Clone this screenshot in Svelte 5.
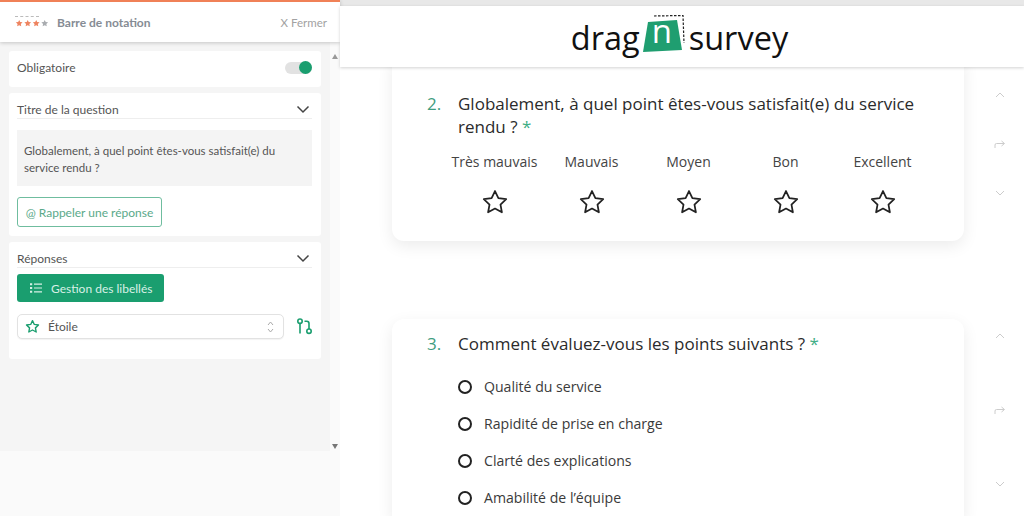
<script>
	const ratings = ['Très mauvais', 'Mauvais', 'Moyen', 'Bon', 'Excellent'];
	const points = [
		'Qualité du service',
		'Rapidité de prise en charge',
		'Clarté des explications',
		'Amabilité de l’équipe'
	];
	const starPath = 'M12 2.6l2.9 6.1 6.7.9-4.9 4.6 1.2 6.6-5.9-3.2-5.9 3.2 1.2-6.6-4.9-4.6 6.7-.9z';
</script>

{#snippet chevron()}
	<svg class="chevron" width="14" height="9" viewBox="0 0 14 9" aria-hidden="true">
		<path d="M1.5 1.5L7 7l5.5-5.5" fill="none" stroke="#444" stroke-width="1.5" />
	</svg>
{/snippet}

{#snippet sideControls(stepUp, stepShare)}
	<div class="side-controls" style="padding-top:{stepUp}px; gap:{stepShare}px">
		<svg width="10" height="6" viewBox="0 0 10 6"><path d="M1 5l4-4 4 4" fill="none" stroke="#ccc" /></svg>
		<svg width="12" height="10" viewBox="0 0 12 10"><path d="M1 9V6q0-1.500 1.500-1.500H10M7.500 2L10.500 4.500 7.500 7" fill="none" stroke="#ccc" /></svg>
		<svg width="10" height="6" viewBox="0 0 10 6"><path d="M1 1l4 4 4-4" fill="none" stroke="#ccc" /></svg>
	</div>
{/snippet}

<div class="page">
	<aside class="sidebar">
		<header class="side-head">
			<div class="head-title">
				<div class="mini-rating">
					<span class="dashes"></span>
					<svg width="34" height="9" viewBox="0 0 136 36">
						{#each [0, 1, 2, 3] as i}
							<path
								transform="translate({i * 34} 0) scale(1.4)"
								d={starPath}
								fill={i < 3 ? '#ee8460' : '#a9acb0'}
							/>
						{/each}
					</svg>
				</div>
				<strong>Barre de notation</strong>
			</div>
			<span class="close">X Fermer</span>
		</header>

		<div class="side-scroll">
			<div class="cards">
				<section class="card required">
					<span>Obligatoire</span>
					<span class="toggle"><span class="knob"></span></span>
				</section>

				<section class="card">
					<div class="card-title">
						<span>Titre de la question</span>
						{@render chevron()}
					</div>
					<div class="question-box">
						Globalement, à quel point êtes-vous satisfait(e) du service rendu ?
					</div>
					<button class="recall">@ Rappeler une réponse</button>
				</section>

				<section class="card answers">
					<div class="card-title">
						<span>Réponses</span>
						{@render chevron()}
					</div>
					<button class="labels">
						<svg width="12" height="10" viewBox="0 0 12 10" aria-hidden="true">
							<path
								d="M0 .2h2.200v2H0zM0 4h2.200v2H0zM0 7.800h2.200v2H0zM4 .6h8v1.200H4zM4 4.400h8v1.200H4zM4 8.200h8v1.200H4z"
								fill="#d8f0e6"
							/>
						</svg>
						Gestion des libellés
					</button>
					<div class="select-row">
						<div class="select">
							<svg width="15" height="15" viewBox="0 0 24 24" aria-hidden="true">
								<path d={starPath} fill="none" stroke="#1a9e6f" stroke-width="2.200" stroke-linejoin="round" />
							</svg>
							<span>Étoile</span>
							<svg class="updown" width="7" height="12" viewBox="0 0 7 12" aria-hidden="true">
								<path d="M1 4l2.500-3L6 4M1 8l2.500 3L6 8" fill="none" stroke="#aaa" />
							</svg>
						</div>
						<svg class="branch" width="17" height="17" viewBox="0 0 17 17" aria-hidden="true">
							<g fill="none" stroke="#1a9e6f" stroke-width="1.600">
								<circle cx="4" cy="3.200" r="2.200" />
								<path d="M4 5.400V15.500" />
								<circle cx="13" cy="13.200" r="2.200" />
								<path d="M13 11V5.500Q13 3.200 10.800 3.200H8.500" />
							</g>
						</svg>
					</div>
				</section>
			</div>
			<div class="scrollbar">
				<span class="arrow up"></span>
				<span class="arrow down"></span>
			</div>
		</div>
	</aside>

	<main class="survey">
		<div class="top-strip"></div>
		<div class="logo-bar">
			<div class="logo">
				<span>drag</span>
				<span class="logo-n">
					<svg width="49" height="40" viewBox="0 0 49 40" aria-hidden="true">
						<path d="M14 2L43 1.500 44 29" fill="none" stroke="#222" stroke-width="1.200" stroke-dasharray="2.500 1.500" />
						<path d="M8 8L37 6 42 36 3 38z" fill="#1f9e70" />
					</svg>
					<span class="n">n</span>
				</span>
				<span>survey</span>
			</div>
		</div>

		<div class="questions">
			<div class="q-row first">
				<article class="q-card">
					<h2><span class="num">2.</span><span>Globalement, à quel point êtes-vous satisfait(e) du service rendu ? <em>*</em></span></h2>
					<div class="rating">
						{#each ratings as label}
							<div class="rating-item">
								<span>{label}</span>
								<svg width="28" height="28" viewBox="0 0 24 24" aria-hidden="true">
									<path d={starPath} fill="none" stroke="#222" stroke-width="1.500" stroke-linejoin="round" />
								</svg>
							</div>
						{/each}
					</div>
				</article>
				{@render sideControls(38, 41)}
			</div>

			<div class="q-row second">
				<article class="q-card open">
					<h2><span class="num">3.</span><span>Comment évaluez-vous les points suivants ? <em>*</em></span></h2>
					<ul>
						{#each points as point}
							<li><span class="radio"></span>{point}</li>
						{/each}
					</ul>
				</article>
				{@render sideControls(14, 66)}
			</div>
		</div>
	</main>
</div>

<style>
	:global(body) {
		margin: 0;
		background: #fff;
	}

	.page {
		display: flex;
		width: 1024px;
		height: 516px;
		overflow: hidden;
	}

	/* ── Sidebar ── */
	.sidebar {
		width: 340px;
		flex-shrink: 0;
		display: flex;
		flex-direction: column;
		background: #fafafa;
		font-family: Lato, sans-serif;
		color: #555;
	}

	.side-head {
		position: relative;
		z-index: 1;
		height: 40px;
		display: flex;
		align-items: center;
		justify-content: space-between;
		padding: 0 13px 0 15px;
		background: #fff;
		border-top: 2px solid #f08157;
		box-shadow: 0 1px 4px rgba(0, 0, 0, 0.2);
	}

	.head-title {
		display: flex;
		align-items: center;
		gap: 8px;
	}

	.head-title strong {
		font-size: 12px;
		color: #868c94;
	}

	.mini-rating {
		display: flex;
		flex-direction: column;
		gap: 2px;
	}

	.dashes {
		width: 24px;
		border-top: 1px dashed #bbb;
	}

	.close {
		font-size: 11.5px;
		color: #a2a2a2;
	}

	.side-scroll {
		height: 409px;
		display: flex;
		background: #f5f5f5;
	}

	.cards {
		width: 312px;
		padding: 9px 0 0 9px;
		display: flex;
		flex-direction: column;
		gap: 6px;
	}

	.card {
		background: #fff;
		border-radius: 3px;
		padding: 8px 9px 0 8px;
		font-size: 12px;
	}

	.required {
		height: 36px;
		box-sizing: border-box;
		padding: 0 9px 3px 8px;
		display: flex;
		align-items: center;
		justify-content: space-between;
	}

	.toggle {
		position: relative;
		width: 27px;
		height: 12px;
		border-radius: 6px;
		background: #e2e2e2;
	}

	.knob {
		position: absolute;
		right: 0;
		top: -1px;
		width: 13px;
		height: 13px;
		border-radius: 50%;
		background: #1a9e6f;
	}

	.card-title {
		display: flex;
		align-items: center;
		justify-content: space-between;
		height: 17px;
		border-bottom: 1px solid #eee;
	}

	.chevron {
		margin-right: 2px;
	}

	.question-box {
		margin-top: 11px;
		height: 56px;
		padding: 12px 7px 0;
		box-sizing: border-box;
		background: #f4f4f4;
		font-size: 11.5px;
		line-height: 17px;
	}

	.recall {
		display: block;
		margin: 11px 0 9px;
		width: 145px;
		height: 30px;
		padding: 0;
		background: #fff;
		border: 1px solid #6fbd9f;
		border-radius: 3px;
		font: 12px Lato, sans-serif;
		color: #5aa98a;
	}

	.answers {
		height: 117px;
		box-sizing: border-box;
	}

	.labels {
		display: flex;
		align-items: center;
		gap: 9px;
		margin-top: 6px;
		width: 147px;
		height: 28px;
		padding: 0 0 0 13px;
		background: #1a9e6f;
		border: 0;
		border-radius: 3px;
		font: 12px Lato, sans-serif;
		color: #d8f0e6;
	}

	.select-row {
		display: flex;
		align-items: center;
		gap: 12px;
		margin-top: 12px;
	}

	.select {
		flex: 1;
		height: 25px;
		box-sizing: border-box;
		display: flex;
		align-items: center;
		gap: 8px;
		padding: 0 9px 0 7px;
		background: #fff;
		border: 1px solid #e2e2e2;
		border-radius: 5px;
		box-shadow: 0 1px 1px rgba(0, 0, 0, 0.05);
	}

	.updown {
		margin-left: auto;
	}

	.branch {
		margin-right: -1px;
	}

	.scrollbar {
		margin-left: 9px;
		flex: 1;
		height: 100%;
		padding: 12px 0 0;
		box-sizing: border-box;
		display: flex;
		flex-direction: column;
		justify-content: space-between;
		align-items: center;
		background: #fafafa;
	}

	.arrow {
		width: 0;
		height: 0;
		border-left: 3.5px solid transparent;
		border-right: 3.5px solid transparent;
	}

	.up {
		border-bottom: 5px solid #999;
	}

	.down {
		margin-bottom: 2px;
		border-top: 5px solid #777;
	}

	/* ── Survey preview ── */
	.survey {
		flex: 1;
		min-width: 0;
		display: flex;
		flex-direction: column;
		font-family: 'Open Sans', sans-serif;
		color: #2b2b2b;
	}

	.top-strip {
		height: 6px;
		flex-shrink: 0;
		background: #e8e8e8;
	}

	.logo-bar {
		position: relative;
		z-index: 1;
		height: 61px;
		flex-shrink: 0;
		display: flex;
		justify-content: center;
		background: #fff;
		box-shadow: 0 1px 3px rgba(0, 0, 0, 0.18);
	}

	.logo {
		display: flex;
		align-items: flex-end;
		height: 54px;
		margin-left: -5px;
		font-size: 32.5px;
		line-height: 44px;
		color: #111;
	}

	.logo-n {
		position: relative;
		width: 49px;
		height: 40px;
		margin-bottom: 6px;
	}

	.logo-n svg {
		position: absolute;
		left: 0;
		top: 0;
	}

	.n {
		position: absolute;
		left: 12px;
		top: -5px;
		color: #fff;
		font-size: 33px;
	}

	.questions {
		flex-shrink: 0;
		padding-left: 52px;
	}

	.q-row {
		display: flex;
	}

	.first {
		margin-top: -13px;
	}

	.second {
		margin-top: 78px;
	}

	.q-card {
		width: 572px;
		flex-shrink: 0;
		height: 187px;
		box-sizing: border-box;
		padding: 38px 35px 0;
		background: #fff;
		border-radius: 12px;
		box-shadow: 0 5px 16px rgba(0, 0, 0, 0.08);
	}

	.open {
		height: 200px;
		padding-top: 13px;
		border-radius: 12px 12px 0 0;
	}

	h2 {
		display: flex;
		margin: 0;
		font-size: 17px;
		font-weight: 400;
		line-height: 23px;
	}

	.num {
		width: 31px;
		flex-shrink: 0;
		color: #3f9d80;
	}

	em {
		font-style: normal;
		color: #3fae86;
	}

	.rating {
		display: grid;
		grid-template-columns: repeat(5, 97px);
		margin: 14px 0 0 19px;
	}

	.rating-item {
		display: flex;
		flex-direction: column;
		align-items: center;
		gap: 16px;
		font-size: 14px;
		line-height: 20px;
		color: #444;
		white-space: nowrap;
	}

	ul {
		list-style: none;
		margin: 13px 0 0 31px;
		padding: 0;
	}

	li {
		display: flex;
		align-items: center;
		gap: 12px;
		height: 37px;
		font-size: 14.1px;
		color: #3a3a3a;
	}

	.radio {
		width: 10px;
		height: 10px;
		border: 2px solid #222;
		border-radius: 50%;
		background: #fff;
	}

	.side-controls {
		display: flex;
		flex-direction: column;
		align-items: center;
		width: 20px;
		margin-left: 26px;
		flex-shrink: 0;
	}
</style>
